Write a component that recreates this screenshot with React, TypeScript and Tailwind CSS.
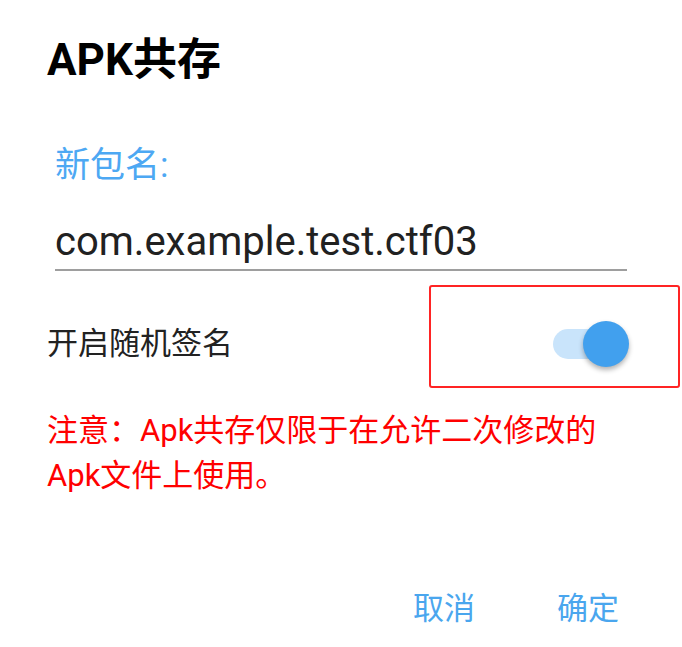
import React from "react";

export default function App() {
  return (
    <div className="relative w-[682px] h-[647px] bg-white overflow-hidden font-['Roboto','Noto_Sans_CJK_SC',sans-serif]">
      <div className="flex flex-col px-[47px]">
        <div className="mt-[34px] text-[44px] leading-[52px] font-bold text-black">APK共存</div>

        <div className="mx-2 mt-[58px] text-[35px] leading-[44px] text-[#4da8f3]">新包名:</div>

        <div className="mx-2 mt-[30px] pb-[3px] border-b-2 border-[#9e9e9e] text-[40px] leading-[48px] text-[#212121]">
          com.example.test.ctf03
        </div>

        <div className="mt-[50px] flex items-center justify-between h-[46px]">
          <span className="text-[31px] leading-[40px] text-[#222222]">开启随机签名</span>
          <div className="relative w-[76px] h-[46px] mr-[6px]">
            <div className="absolute left-0 top-[8px] w-[66px] h-[30px] rounded-full bg-[#c9e4fb]" />
            <div className="absolute right-0 top-0 w-[46px] h-[46px] rounded-full bg-[#41a0ee] shadow-[0_3px_5px_rgba(0,0,0,0.3)]" />
          </div>
        </div>

        <div className="mt-[41px] text-[31px] leading-[45px] text-[#ff0000]">
          注意：Apk共存仅限于在允许二次修改的
          <br />
          Apk文件上使用。
        </div>

        <div className="mt-[91px] flex justify-end gap-[50px]">
          <button className="px-4 text-[31px] leading-[40px] text-[#4aa6ee]">取消</button>
          <button className="px-4 text-[31px] leading-[40px] text-[#4aa6ee]">确定</button>
        </div>
      </div>

      <div className="absolute left-[429px] top-[285px] w-[251px] h-[103px] border-2 border-[#ff2424] rounded-[3px]" />
    </div>
  );
}
